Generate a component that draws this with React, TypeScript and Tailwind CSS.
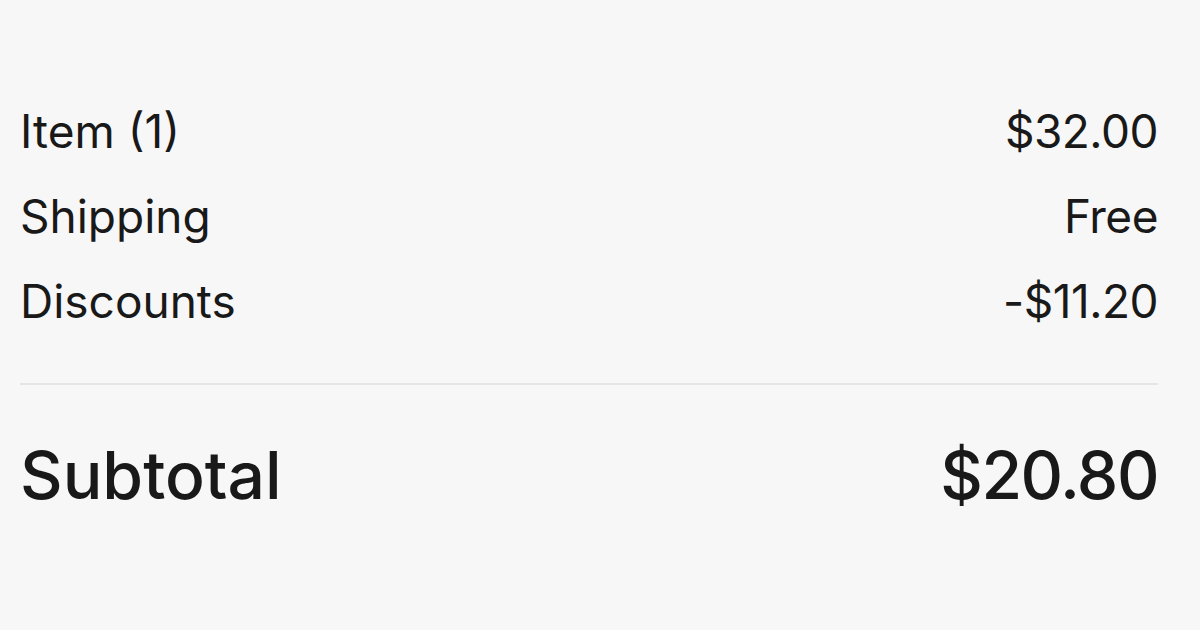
const ROWS = [
  { label: 'Item (1)', value: '$32.00' },
  { label: 'Shipping', value: 'Free' },
  { label: 'Discounts', value: '-$11.20' },
];

export default function App() {
  return (
    <div
      className="h-[630px] w-[1200px] bg-[#f7f7f7] pl-[20px] pr-[42px] pt-[88px] text-[#191919]"
      style={{ fontFamily: 'Inter, "Noto Sans", sans-serif' }}
    >
      <div className="flex flex-col">
        {ROWS.map((row) => (
          <div key={row.label} className="flex h-[85px] items-center justify-between text-[46px] leading-none">
            <span>{row.label}</span>
            <span className="tracking-[-0.5px]">{row.value}</span>
          </div>
        ))}
      </div>
      <div className="mt-[40px] h-[2px] bg-[#e5e5e5]" />
      <div className="flex h-[180px] items-center justify-between text-[66px] font-medium leading-none">
        <span>Subtotal</span>
        <span className="tracking-[-1.5px]">$20.80</span>
      </div>
    </div>
  );
}
